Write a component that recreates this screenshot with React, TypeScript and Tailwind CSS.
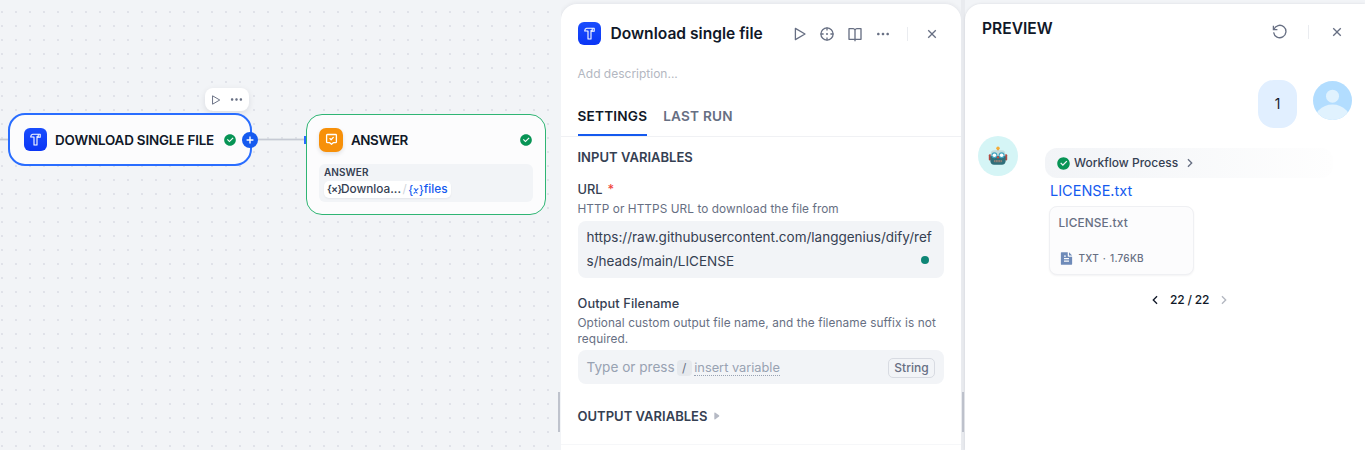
import React from "react";
import {
  RiBookOpenLine,
  RiMoreFill,
  RiCloseLine,
  RiCheckboxCircleFill,
  RiArrowRightSLine,
  RiArrowLeftSLine,
  RiFileTextFill,
} from "react-icons/ri";

function HammerIcon({ className }: { className: string }) {
  return (
    <span className={`flex shrink-0 items-center justify-center bg-gradient-to-b from-[#1a4dfd] to-[#0b35f5] ${className}`}>
      <svg width="13" height="15" viewBox="0 0 13 15" fill="none" stroke="#fff" strokeWidth="1.1" strokeLinejoin="round">
        <path d="M3.6 2.2H11.2V5.2H9.2L8 4.6V13H5V5H1.7C1.7 3.4 2.4 2.4 3.6 2.2Z" />
        <path d="M9.2 2.2V5.2" />
      </svg>
    </span>
  );
}

function AnswerIcon() {
  return (
    <span className="flex h-6 w-6 shrink-0 items-center justify-center rounded-[7px] bg-[#f79009] shadow-[0_2px_4px_rgba(16,24,40,0.12)]">
      <svg width="13" height="13" viewBox="0 0 13 13" fill="none" stroke="#fff" strokeWidth="1.3" strokeLinecap="round" strokeLinejoin="round">
        <path d="M2.4 1.5H10.6Q11.4 1.5 11.4 2.3V8.9Q11.4 9.7 10.6 9.7H8.3L6.5 11.3L4.7 9.7H2.4Q1.6 9.7 1.6 8.9V2.3Q1.6 1.5 2.4 1.5Z" />
        <path d="M4.9 5.6L6.1 6.7L8.3 4.4" />
      </svg>
    </span>
  );
}

function PlayIcon({ size }: { size: number }) {
  return (
    <svg width={size} height={size} viewBox="0 0 16 16" fill="none" stroke="currentColor" strokeWidth="1.3" strokeLinejoin="round">
      <path d="M3.4 2.4L13 8L3.4 13.6Z" />
    </svg>
  );
}

function TargetIcon() {
  return (
    <svg width="16" height="16" viewBox="0 0 16 16" fill="none" stroke="currentColor" strokeWidth="1.3">
      <circle cx="8" cy="8" r="6.1" />
      <path d="M8 1.6V4.6M8 11.4V14.4M1.6 8H4.6M11.4 8H14.4" />
      <circle cx="8" cy="8" r="1" fill="currentColor" stroke="none" />
    </svg>
  );
}

function RestartIcon() {
  return (
    <svg width="16" height="16" viewBox="0 0 16 16" fill="none" stroke="currentColor" strokeWidth="1.3">
      <path d="M1.4 1.8V5.6H5.4" />
      <path d="M1.9 5.4A6.2 6.2 0 1 1 1.6 8.4" />
    </svg>
  );
}

function PlusBadge() {
  return (
    <svg width="16" height="16" viewBox="0 0 16 16" className="absolute top-[132px] left-[242px]">
      <circle cx="8" cy="8" r="8" fill="#155aef" />
      <path d="M8 4.6V11.4M4.6 8H11.4" stroke="#fff" strokeWidth="1.4" />
    </svg>
  );
}

function RobotFace() {
  return (
    <svg width="20" height="20" viewBox="0 0 20 20">
      <rect x="9.2" y="2" width="1.6" height="3" fill="#b98b4a" />
      <circle cx="10" cy="2.2" r="1.7" fill="#f5ac37" />
      <rect x="0.8" y="8.2" width="2.4" height="6.4" rx="1" fill="#b34a42" />
      <rect x="16.8" y="8.2" width="2.4" height="6.4" rx="1" fill="#b34a42" />
      <path d="M2.8 7.5Q3 4.2 6 4.2H14Q17 4.2 17.2 7.5V11H2.8Z" fill="#c3dcdc" />
      <path d="M2.4 10H17.6V15.5Q17 18.8 14 18.8H6Q3 18.8 2.4 15.5Z" fill="#2f6f7a" />
      <circle cx="6.4" cy="9.2" r="3" fill="#45a6c0" />
      <circle cx="13.6" cy="9.2" r="3" fill="#45a6c0" />
      <circle cx="6.4" cy="9.2" r="1.8" fill="#fff" />
      <circle cx="13.6" cy="9.2" r="1.8" fill="#fff" />
      <path d="M10 9.6L11.4 12.2H8.6Z" fill="#d9483b" />
      <rect x="5.8" y="14" width="8.4" height="2.2" rx="1" fill="#8b8178" />
      <path d="M7.5 14V16.2M10 14V16.2M12.5 14V16.2" stroke="#43606b" strokeWidth="0.5" />
    </svg>
  );
}

function UserAvatar() {
  return (
    <svg width="39" height="39" viewBox="0 0 39 39">
      <defs>
        <clipPath id="user-clip">
          <circle cx="19.5" cy="19.5" r="19.5" />
        </clipPath>
      </defs>
      <g clipPath="url(#user-clip)">
        <rect width="39" height="39" fill="#b2ddff" />
        <circle cx="19.5" cy="15.2" r="6.5" fill="#e0f2fe" />
        <circle cx="19.5" cy="43" r="19.5" fill="#e0f2fe" />
      </g>
    </svg>
  );
}

function Canvas() {
  return (
    <div className="relative w-[561px] shrink-0 bg-[#f2f4f7] bg-[radial-gradient(circle_at_center,#e0e2e9_0.7px,transparent_1.3px)] bg-[length:14px_14px] bg-[position:-5px_5px]">
      <div className="absolute top-[139px] left-0 h-px w-[10px] bg-[#c6cad4] shadow-[0_0_0_0.5px_#d0d5dc]" />
      <div className="absolute top-[139px] left-[250px] h-px w-[56px] bg-[#c6cad4] shadow-[0_0_0_0.5px_#d0d5dc]" />
      <div className="absolute top-[136px] left-[304px] h-[8px] w-[3px] bg-[#296dff]" />

      <div className="absolute top-[88px] left-[205px] flex h-[23px] w-[44px] items-center justify-center gap-[7px] rounded-lg bg-white text-[#676f83] shadow-[0_2px_6px_rgba(16,24,40,0.10)]">
        <PlayIcon size={12} />
        <RiMoreFill size={15} />
      </div>

      <div className="absolute top-[113px] left-[8px] flex h-[53px] w-[244px] items-center rounded-[17px] border-2 border-[#296dff] bg-[#fcfcfd] pl-[14px]">
        <HammerIcon className="h-[23px] w-[23px] rounded-[6px]" />
        <span className="ml-2 w-[168px] pt-px text-[13.4px] font-semibold tracking-[-0.16px] whitespace-nowrap text-[#101828]">DOWNLOAD SINGLE FILE</span>
        <RiCheckboxCircleFill size={14} className="shrink-0 text-[#079455]" />
      </div>
      <PlusBadge />

      <div className="absolute top-[114px] left-[306px] flex h-[101px] w-[240px] flex-col rounded-[16px] border border-[#2fb574] bg-[#fcfcfd] px-3">
        <div className="mt-3 flex h-[25px] items-center">
          <AnswerIcon />
          <span className="ml-2 flex-1 pt-px text-[13.4px] font-semibold tracking-[-0.4px] text-[#101828]">ANSWER</span>
          <RiCheckboxCircleFill size={14} className="text-[#079455]" />
        </div>
        <div className="mt-[12px] h-[38px] rounded-[6px] bg-[#f2f4f7] px-[5px] pt-px">
          <div className="text-[10px] leading-[15px] font-semibold tracking-[0.05px] text-[#354052]">ANSWER</div>
          <div className="mt-px flex h-[17px] w-[127px] items-center rounded-[5px] bg-white pt-px pl-[3px] text-[11.8px] font-medium whitespace-nowrap text-[#354052] shadow-[0_1px_2px_rgba(16,24,40,0.06)]">
            <span className="w-[14px] text-[10.5px] font-semibold tracking-[-0.7px]">{"{×}"}</span>
            <span className="w-[60px]">Downloa...</span>
            <span className="mx-[1.5px] font-normal text-[#d0d5dc]">/</span>
            <span className="flex w-[14px] items-center text-[11px] leading-none tracking-[-0.2px] text-[#155aef]">
              {"{"}
              <svg width="6" height="6" viewBox="0 0 6 6" fill="none" stroke="currentColor" strokeWidth="1.1" className="mt-px shrink-0">
                <path d="M0.8 0.8H1.4Q2.1 0.8 2.4 1.7L3.4 4.4Q3.7 5.2 4.6 5.2M5.4 0.8Q4.6 0.7 3.8 1.8L2.1 4.2Q1.3 5.3 0.5 5.2" />
              </svg>
              {"}"}
            </span>
            <span className="ml-[1.5px] text-[#155aef]">files</span>
          </div>
        </div>
      </div>
      <div className="absolute top-[392px] left-[558px] h-[40px] w-[2px] bg-[#bfc3cd]" />
    </div>
  );
}

function SettingsPanel() {
  return (
    <section className="mt-1 flex w-[400px] shrink-0 flex-col rounded-t-[16px] bg-white pt-[18px] shadow-[0_0_5px_rgba(16,24,40,0.09)]">
      <header className="flex h-6 items-center pr-4 pl-[17px] text-[#676f83]">
        <HammerIcon className="-mt-px h-[23px] w-[23px] rounded-[6px]" />
        <h1 className="ml-[9.5px] w-[181px] text-[15.6px] font-semibold whitespace-nowrap text-[#101828]">Download single file</h1>
        <PlayIcon size={16} />
        <span className="ml-[11.5px]"><TargetIcon /></span>
        <RiBookOpenLine size={16} className="ml-[12px]" />
        <RiMoreFill size={16} className="ml-[12px]" />
        <span className="ml-[16px] h-[14px] w-px bg-[#eaecf0]" />
        <RiCloseLine size={16} className="ml-[16px]" />
      </header>
      <p className="mt-5 px-4 pl-[16.5px] text-[12px] leading-4 text-[#b3b7c1]">Add description...</p>
      <nav className="mt-[25px] flex h-[30px] gap-4 border-b border-[#f0f1f4] pl-[16.5px] text-[13.6px] leading-[19px] font-semibold tracking-[0.2px] text-[#676f83]">
        <span className="h-[29px] border-b-2 border-[#155aef] text-[#101828]">SETTINGS</span>
        <span>LAST RUN</span>
      </nav>
      <div className="pr-[17px] pl-[16.5px] text-[#354052]">
        <h2 className="mt-[10px] text-[13px] leading-5 font-semibold tracking-[0.02px]">INPUT VARIABLES</h2>
        <label className="mt-[13px] flex text-[12.8px] leading-5 font-medium">
          URL<span className="ml-[5px] text-[#f04438]">*</span>
        </label>
        <p className="mt-px text-[11.8px] leading-4 tracking-[0.08px] text-[#676f83]">HTTP or HTTPS URL to download the file from</p>
        <div className="relative mt-1 h-[57px] rounded-[8px] bg-[#f2f4f7] px-[9px] pt-1 text-[13.5px] leading-6 whitespace-nowrap">
          https://raw.githubusercontent.com/langgenius/dify/ref
          <br />
          s/heads/main/LICENSE
          <span className="absolute right-[15px] bottom-[14px] h-2 w-2 rounded-full bg-[#0e8676]" />
        </div>
        <label className="mt-4 block text-[12.8px] leading-5 font-medium tracking-[0.08px]">Output Filename</label>
        <p className="mt-px text-[11.8px] leading-4 tracking-[0.1px] text-[#676f83]">
          Optional custom output file name, and the filename suffix is not
          <br />
          required.
        </p>
        <div className="mt-[3px] flex h-[34px] items-center rounded-[8px] bg-[#f2f4f7] pt-px pr-[9px] pl-[9px] text-[13.6px] whitespace-nowrap text-[#98a2b2]">
          <span>Type or press</span>
          <span className="ml-[2px] flex h-4 w-[15px] items-center justify-center rounded bg-[#e6e9ed] text-[12px] text-[#676f83]">/</span>
          <span className="ml-[2.5px] border-b border-dotted border-[#98a2b2] text-[12.8px] leading-[15px]">insert variable</span>
          <span className="ml-auto flex h-5 w-[47px] items-center justify-center rounded-[5px] border border-[#d8dbe2] text-[12px] font-medium text-[#676f83]">String</span>
        </div>
        <h2 className="mt-[22px] flex items-center text-[13px] leading-5 font-semibold tracking-[0.02px]">
          OUTPUT VARIABLES
          <svg width="7" height="8" viewBox="0 0 7 8" className="ml-[6px]" fill="#b5b9c4">
            <path d="M0.3 1Q0.3 0.3 1 0.5L5 3.3Q5.8 4 5 4.6L1 7.4Q0.3 7.7 0.3 7Z" />
          </svg>
        </h2>
      </div>
      <div className="mt-[18px] h-px bg-[#f6f7f9]" />
    </section>
  );
}

function PreviewPanel() {
  return (
    <section className="mt-1 flex w-[400px] shrink-0 flex-col rounded-tl-[16px] bg-white shadow-[0_0_3px_rgba(16,24,40,0.1)]">
      <header className="mt-[14px] flex h-[22px] items-center pr-5 pl-[17px] text-[#676f83]">
        <h1 className="flex-1 text-[15.6px] font-semibold text-[#101828]">PREVIEW</h1>
        <div className="mt-[6px] flex items-center">
          <RestartIcon />
          <span className="ml-5 h-[14px] w-px bg-[#eaecf0]" />
          <RiCloseLine size={16} className="ml-5" />
        </div>
      </header>
      <div className="mt-9 flex justify-end gap-4 pr-[13px]">
        <div className="mt-[4px] flex h-12 w-[39px] items-center justify-center rounded-[16px] bg-[#e1efff] pt-px text-[13.8px] text-[#101828]">1</div>
        <div className="mt-[5px]"><UserAvatar /></div>
      </div>
      <div className="mt-2 flex pl-[13px]">
        <div className="flex h-10 w-10 shrink-0 items-center justify-center rounded-full bg-[#d5f5f6]"><RobotFace /></div>
        <div className="ml-[27px] pt-3">
          <div className="flex h-[30px] w-[288px] items-center rounded-[12px] bg-gradient-to-r from-[#f2f4f7] to-[#fefefe] pl-[11px] text-[12px] font-medium text-[#354052]">
            <RiCheckboxCircleFill size={15} className="text-[#079455]" />
            <span className="ml-[3px] w-[103.5px] whitespace-nowrap">Workflow Process</span>
            <RiArrowRightSLine size={16} className="ml-[4px] text-[#676f83]" />
          </div>
          <div className="mt-px ml-[5px] text-[14.5px] leading-6 text-[#155aef]">LICENSE.txt</div>
          <div className="mt-[3px] ml-1 flex h-[69px] w-[145px] flex-col justify-between rounded-[8px] border border-[#eff0f3] bg-[#fcfcfd] px-[8.5px] pt-[8px] pb-[8px] text-[#676f83] shadow-[0_1px_2px_rgba(16,24,40,0.05)]">
            <span className="text-[11.8px] leading-4 font-medium tracking-[0.15px]">LICENSE.txt</span>
            <span className="flex items-center text-[10px] leading-4 font-medium tracking-[0.25px] [word-spacing:1px]">
              <RiFileTextFill size={15} className="mr-[5px] text-[#6f8bb9]" />
              TXT · 1.76KB
            </span>
          </div>
        </div>
      </div>
      <div className="mt-[15px] ml-[182px] flex h-5 items-center text-[12px] font-medium text-[#101828]">
        <RiArrowLeftSLine size={16} />
        <span className="mx-[7px] w-[39px] tracking-[-0.15px] whitespace-nowrap">22 / 22</span>
        <RiArrowRightSLine size={16} className="text-[#b3b7c1]" />
      </div>
    </section>
  );
}

export default function App() {
  return (
    <main className="flex h-[450px] w-[1365px] overflow-hidden bg-[#f2f4f7] font-[Inter,sans-serif]">
      <Canvas />
      <SettingsPanel />
      <div className="flex w-1 shrink-0 flex-col bg-[#e9ebef]">
        <div className="mt-[392px] ml-[1px] h-10 w-[2px] bg-[#bfc3cd]" />
      </div>
      <PreviewPanel />
    </main>
  );
}
